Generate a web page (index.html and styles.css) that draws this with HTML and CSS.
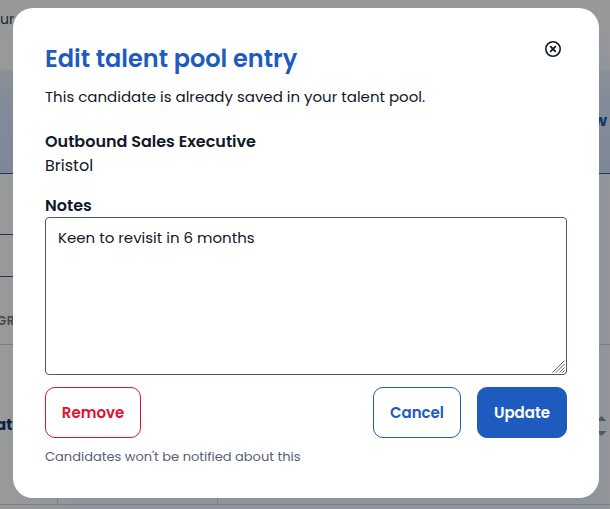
FILE: index.html
```html
<!DOCTYPE html>
<html lang="en">
<head>
<meta charset="utf-8">
<title>Edit talent pool entry</title>
<link rel="stylesheet" href="styles.css">
</head>
<body>
<main class="page" aria-hidden="true">
  <div class="topbar"><span>ur</span></div>
  <div class="banner"><span>w</span></div>
  <div class="row filters"></div>
  <div class="row search"></div>
  <div class="row heading"><span>GR</span></div>
  <div class="row entry"><span>atu</span>
    <svg class="sort" width="14" height="24" viewBox="0 0 14 24"><path d="M1.500 8 6.500 3l5 5ZM1.500 18l5 5 5-5Z"/></svg>
    <div class="cells"><i></i><i></i><i></i></div>
  </div>
</main>
<div class="overlay">
  <section class="modal" role="dialog">
    <header class="modal-header">
      <h1>Edit talent pool entry</h1>
      <button class="close" aria-label="Close">
        <svg width="18" height="18" viewBox="0 0 18 18"><circle cx="9" cy="9" r="7.2"/><path d="m6.7 6.7 4.600 4.600m0-4.600-4.600 4.600"/></svg>
      </button>
    </header>
    <p class="intro">This candidate is already saved in your talent pool.</p>
    <p class="job">Outbound Sales Executive</p>
    <p class="place">Bristol</p>
    <label class="label" for="notes">Notes</label>
    <div class="field">
      <textarea id="notes" spellcheck="false">Keen to revisit in 6 months</textarea>
      <svg class="grip" width="13" height="13" viewBox="0 0 13 13"><path d="M.5 12.5l12-12M4 12.5l8.5-8.5M7.5 12.5l5-5M10.5 12.5l2-2"/></svg>
    </div>
    <div class="actions">
      <button class="btn remove">Remove</button>
      <button class="btn cancel">Cancel</button>
      <button class="btn update">Update</button>
    </div>
    <p class="hint">Candidates won't be notified about this</p>
  </section>
</div>
</body>
</html>
```
FILE: styles.css
```css
* { box-sizing: border-box; }
body {
  margin: 0;
  height: 509px;
  overflow: hidden;
  font-family: Poppins, Inter, sans-serif;
  font-size: 16px;
  color: #111827;
  background: #98999b;
}
h1, p { margin: 0; white-space: nowrap; }

.page {
  height: 509px;
  overflow: hidden;
  background:
    linear-gradient(#98989a, rgba(152, 152, 154, 0) 60px),
    linear-gradient(90deg, #98999b 13px, #8f959d 80px, #8f959d 599px, #949699 610px);
}
.topbar { height: 70px; padding-top: 7px; line-height: 24px; font-size: 14px; color: #202733; }
.banner {
  height: 104px;
  padding: 39px 3px 0 0;
  text-align: right;
  font-size: 16px;
  font-weight: 700;
  line-height: 24px;
  color: #173768;
  background: linear-gradient(#8b9096, #828b99 35%, #7d8796);
  border-bottom: 1px solid #1c3768;
}
.row { border-bottom: 1px solid #7b7e84; }
.filters { height: 61px; border-image: linear-gradient(90deg, #27344e 50%, transparent 50%) 1; }
.search { height: 42px; border-image: linear-gradient(90deg, #27344e 50%, transparent 50%) 1; }
.heading { height: 68px; padding-top: 33px; line-height: 22px; font-size: 12px; font-weight: 600; color: #45474b; letter-spacing: .5px; }
.heading span { margin-left: -3px; }
.entry { height: 160px; display: grid; grid-template-columns: 1fr auto; grid-template-rows: 1fr 7px; padding-top: 68px; font-size: 15px; font-weight: 700; line-height: 24px; color: #0b2239; }
.entry span { margin-left: -4px; }
.sort { fill: #4d5870; margin-right: 1px; }
.cells { grid-column: 1 / 3; display: grid; grid-template-columns: 58px 160px 1fr; }
.cells i { border-right: 1px solid #7b7e84; }
.cells i:last-child { border: 0; }

.overlay { position: absolute; inset: 0; padding: 8px 11px 11px 13px; }
.modal {
  height: 490px;
  padding: 32px;
  border-radius: 20px;
  background: #fff;
}
.modal-header { display: flex; justify-content: space-between; height: 45px; }
h1 { font-size: 24px; line-height: 38px; font-weight: 600; color: #1d5bbf; }
.close { width: 18px; height: 18px; margin-right: 5px; padding: 0; border: 0; background: none; }
.close svg { display: block; fill: none; stroke: #111827; stroke-width: 1.6; stroke-linecap: round; }
.close path { stroke-width: 1.8; }
.intro { line-height: 24px; font-size: 15px; }
.job { margin-top: 21px; line-height: 24px; font-weight: 600; }
.place { line-height: 24px; }
.label { display: block; margin-top: 16px; height: 23px; line-height: 24px; font-weight: 600; }
.field { position: relative; height: 158px; }
textarea {
  display: block;
  width: 100%;
  height: 158px;
  padding: 8px 12px;
  border: 1px solid #4b5a70;
  border-radius: 4px;
  resize: none;
  outline: 0;
  overflow: hidden;
  font: inherit;
  font-size: 15px;
  line-height: 24px;
  color: inherit;
}
.grip { position: absolute; right: 2px; bottom: 2px; fill: none; stroke: #666; stroke-width: 1; }
.actions { display: flex; gap: 16px; margin-top: 12px; }
.btn {
  height: 51px;
  padding: 0;
  border: 1px solid;
  border-radius: 10px;
  background: #fff;
  font: inherit;
  font-size: 15px;
  font-weight: 600;
}
.remove { width: 96px; margin-right: auto; color: #e3112f; }
.cancel { width: 88px; color: #1d5bbf; }
.update { width: 90px; color: #fff; background: #1d5bbf; border-color: #1d5bbf; }
.hint { margin-top: 8px; line-height: 22px; font-size: 13px; color: #566074; }
```
